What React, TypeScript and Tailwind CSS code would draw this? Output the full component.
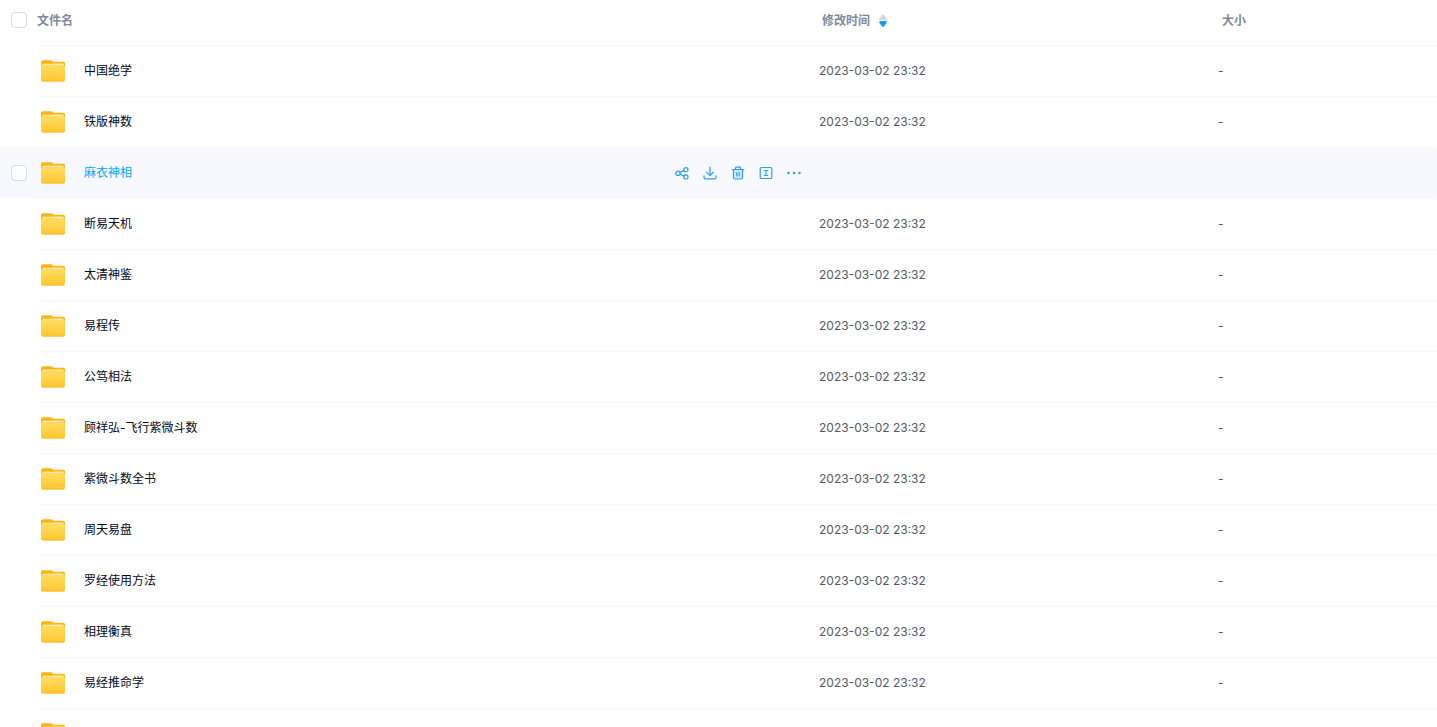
import clsx from "clsx";

const modified = "2023-03-02 23:32";

const files = [
  { name: "中国绝学", modified, size: "-" },
  { name: "铁版神数", modified, size: "-" },
  { name: "麻衣神相", modified, size: "-" },
  { name: "断易天机", modified, size: "-" },
  { name: "太清神鉴", modified, size: "-" },
  { name: "易程传", modified, size: "-" },
  { name: "公笃相法", modified, size: "-" },
  { name: "顾祥弘-飞行紫微斗数", modified, size: "-" },
  { name: "紫微斗数全书", modified, size: "-" },
  { name: "周天易盘", modified, size: "-" },
  { name: "罗经使用方法", modified, size: "-" },
  { name: "相理衡真", modified, size: "-" },
  { name: "易经推命学", modified, size: "-" },
  { name: "", modified: "", size: "" },
];

const hovered = 2;

function FolderIcon() {
  return (
    <svg width="26" height="24" viewBox="0 0 26 24" className="shrink-0" aria-hidden="true">
      <defs>
        <linearGradient id="folder" x1="0" y1="0" x2="0" y2="1">
          <stop offset="0" stopColor="#ffdc62" />
          <stop offset="1" stopColor="#ffc62e" />
        </linearGradient>
      </defs>
      <path d="M1 3.200C1 2 1.800 1.300 3 1.300h7.600c.8 0 1.300.2 1.900.7l.7.8H23c1.200 0 2 .8 2 2V12H1z" fill="#ffb414" />
      <path d="M2.200 6.500c0-1.200.6-1.800 1.800-1.800h7.500l1.800-.3H22c1.200 0 1.900.6 1.900 1.800V10H2.200z" fill="#ffe9a3" />
      <path d="M1 7.800c0-1.100.7-1.700 1.800-1.700h20.400c1.100 0 1.800.6 1.800 1.700v12.400c0 1.500-.8 2.300-2.300 2.300H3.300C1.800 22.500 1 21.700 1 20.200z" fill="url(#folder)" />
      <path d="M1.300 20.800c.3 1.100 1 1.700 2.200 1.700h19c1.200 0 1.900-.6 2.200-1.700-.5.500-1.200.8-2.200.8h-19c-1 0-1.700-.3-2.200-.8z" fill="#ffb932" />
    </svg>
  );
}

function Checkbox({ label }: { label: string }) {
  return (
    <input
      type="checkbox"
      aria-label={label}
      className="block size-4 appearance-none rounded-[4px] border border-[#d9dae3] bg-white checked:bg-[#06a7ff]"
    />
  );
}

const actions = [
  {
    label: "分享",
    icon: (
      <>
        <circle cx="3" cy="7.300" r="2.200" />
        <circle cx="10.900" cy="3.700" r="2.100" />
        <circle cx="10.900" cy="10.900" r="2.100" />
        <path d="M5.100 6.400 8.900 4.600M5.100 8.300l3.800 1.800" />
      </>
    ),
  },
  {
    label: "下载",
    icon: <path d="M7 1v8.500M3.500 6.200 7 9.700l3.500-3.500M1 9.800v1.400c0 1 .6 1.600 1.600 1.600h8.800c1 0 1.600-.6 1.600-1.600V9.800" />,
  },
  {
    label: "删除",
    icon: (
      <>
        <path d="M2.500 3.700v7.600c0 1.100.6 1.700 1.700 1.700h5.600c1.100 0 1.700-.6 1.700-1.700V3.700" fill="#d3e8ff" />
        <path d="M1.200 3.500h11.600M4.500 3.300V2c0-.6.300-.9.900-.9h3.200c.6 0 .9.300.9.900v1.300M5.800 6.500v3.300M8.200 6.500v3.300" />
      </>
    ),
  },
  {
    label: "重命名",
    icon: (
      <>
        <rect x="1.200" y="1.500" width="11.600" height="11" rx="1.300" />
        <path d="M5.200 4.500h3.600M5.200 9.500h3.600M7 4.500v5" />
      </>
    ),
  },
  {
    label: "更多",
    icon: (
      <g fill="currentColor" stroke="none">
        <circle cx="1.500" cy="7" r="1.250" />
        <circle cx="7" cy="7" r="1.250" />
        <circle cx="12.500" cy="7" r="1.250" />
      </g>
    ),
  },
];

function RowActions() {
  return (
    <div className="flex gap-3.5">
      {actions.map((action) => (
        <button key={action.label} type="button" aria-label={action.label} className="text-[#2b9cff]">
          <svg
            width="14"
            height="14"
            viewBox="0 0 14 14"
            fill="none"
            stroke="currentColor"
            strokeWidth="1.200"
            strokeLinecap="round"
            strokeLinejoin="round"
            className="block"
          >
            {action.icon}
          </svg>
        </button>
      ))}
    </div>
  );
}

function FileRow({ file, active }: { file: (typeof files)[number]; active: boolean }) {
  const cell = "border-t border-[#f7f7f9]";
  return (
    <tr className={clsx("h-[51px]", active && "bg-[#f7f9fe]")}>
      <td className="pl-[11px]">{active && <Checkbox label={file.name} />}</td>
      <td className={cell}>
        <div className="flex items-center pl-[3px] pr-[18px]">
          <FolderIcon />
          <a href="#" className={clsx("ml-[18px] flex-1", active ? "text-[#06a7ff]" : "text-[#03081a]")}>
            {file.name}
          </a>
          {active && <RowActions />}
        </div>
      </td>
      <td className={clsx(cell, "text-[#535a66]")}>{!active && file.modified}</td>
      <td className={clsx(cell, "text-[#535a66]", active && "rounded-r-sm")}>{!active && file.size}</td>
    </tr>
  );
}

export default function App() {
  return (
    <main className="h-screen overflow-hidden bg-white font-['Inter','Noto_Sans_CJK_SC',sans-serif] text-xs">
      <table className="w-full table-fixed border-separate border-spacing-0 text-left">
        <colgroup>
          <col className="w-[37px]" />
          <col />
          <col className="w-[399px]" />
          <col className="w-[219px]" />
        </colgroup>
        <thead>
          <tr className="h-[45px] text-[#818999]">
            <th className="pb-1.5 pl-[11px]">
              <Checkbox label="全选" />
            </th>
            <th className="pb-1 font-bold">文件名</th>
            <th className="pb-1 pl-[3px] font-bold">
              <button type="button" className="flex items-center gap-2">
                修改时间
                <svg width="10" height="14" viewBox="0 0 10 14" aria-hidden="true">
                  <path d="M3.800 1.200a1.700 1.700 0 0 1 2.400 0L8.400 4.100c.7 1 .3 2.200-.8 2.200H2.400c-1.100 0-1.500-1.200-.8-2.200z" fill="#d4d7e0" />
                  <path d="M3.800 12.200a1.700 1.700 0 0 0 2.400 0L8.400 9.300c.7-1 .3-2.300-.8-2.300H2.400c-1.100 0-1.500 1.300-.8 2.300z" fill="#169cff" />
                </svg>
              </button>
            </th>
            <th className="pb-1 pl-1 font-bold">大小</th>
          </tr>
        </thead>
        <tbody>
          {files.map((file, i) => (
            <FileRow key={i} file={file} active={i === hovered} />
          ))}
        </tbody>
      </table>
    </main>
  );
}
